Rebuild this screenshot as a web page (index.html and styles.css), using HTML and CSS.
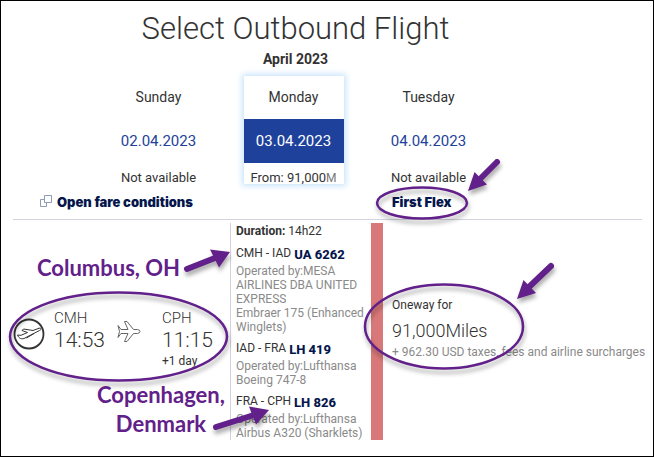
FILE: index.html
```html
<!DOCTYPE html>
<html lang="en">
<head>
<meta charset="utf-8">
<title>Select Outbound Flight</title>
<link rel="stylesheet" href="styles.css">
</head>
<body>
<main class="page">
  <header class="heading">
    <h1>Select Outbound Flight</h1>
    <h2>April 2023</h2>
    <div class="days">
      <section class="day">
        <h3>Sunday</h3>
        <a class="date" href="#">02.04.2023</a>
        <p>Not available</p>
      </section>
      <section class="day selected">
        <h3>Monday</h3>
        <a class="date" href="#">03.04.2023</a>
        <p>From: 91,000<span class="unit">M</span></p>
      </section>
      <section class="day">
        <h3>Tuesday</h3>
        <a class="date" href="#">04.04.2023</a>
        <p>Not available</p>
      </section>
    </div>
  </header>
  <div class="fares">
    <a class="conditions" href="#">
      <svg class="window-icon" viewBox="0 0 12 12" aria-hidden="true"><path d="M4.500 .5h7v7h-7zM4.500 4.500h-4v7h6v-4"/></svg>
      Open fare conditions
    </a>
    <a class="flex-fare" href="#">First Flex</a>
  </div>
  <div class="flight">
    <section class="times">
      <svg class="takeoff" viewBox="0 0 32 32" aria-hidden="true">
        <circle cx="16" cy="16" r="14.500" stroke-width="1.800"/>
        <path d="M4.500 17l3.500 .3 6.500-2.800-5.500-2 1.500-1.500 9.500 1.500 6-2.300c2.500-.6 2.800 1.300 .5 2.300L11 20.500c-2.500 .7-5 .2-6.500-3.500zM21 15.500L13.500 20"/>
      </svg>
      <div class="stop">
        <span class="airport">CMH</span>
        <time>14:53</time>
      </div>
      <svg class="plane" viewBox="0 0 24 22" aria-hidden="true"><path d="M1 5.500l3 4h7L7.500 1.500H10l6.500 8h4q2.500 .5 2.500 2t-2.500 2h-4l-6.500 8H7.500l3.500-8H4l-3 4 1.500-6z"/></svg>
      <div class="stop">
        <span class="airport">CPH</span>
        <time>11:15</time>
        <span class="offset">+1 day</span>
      </div>
    </section>
    <section class="segments">
      <p class="duration"><b>Duration:</b> 14h22</p>
      <article>
        <h4>CMH - IAD <a href="#">UA 6262</a></h4>
        <p>Operated by:MESA AIRLINES DBA UNITED EXPRESS<br>Embraer 175 (Enhanced Winglets)</p>
      </article>
      <article>
        <h4>IAD - FRA <a href="#">LH 419</a></h4>
        <p>Operated by:Lufthansa<br>Boeing 747-8</p>
      </article>
      <article>
        <h4>FRA - CPH <a href="#">LH 826</a></h4>
        <p>Operated by:Lufthansa<br>Airbus A320 (Sharklets)</p>
      </article>
    </section>
    <div class="bar"></div>
    <section class="price">
      <p class="caption">Oneway for</p>
      <p class="miles">91,000Miles</p>
      <p class="taxes">+ 962.30 USD taxes, fees and airline surcharges</p>
    </section>
  </div>
  <svg class="marks" width="654" height="457" viewBox="0 0 654 457" aria-hidden="true">
    <g class="rings">
      <ellipse cx="422" cy="203" rx="45" ry="15.500"/>
      <ellipse cx="118.500" cy="336.500" rx="108.500" ry="44"/>
      <ellipse cx="444" cy="326.500" rx="79" ry="42"/>
    </g>
    <g class="arrows">
      <path d="M497 162L479 180"/><path class="tip" d="M468 191l6.500-19 12.500 12.500z"/>
      <path d="M551 266L529 287"/><path class="tip" d="M517 299l6.500-19 12.500 13z"/>
      <path d="M187 269L215 258"/><path class="tip" d="M230 252l-20-2.500 9 18z"/>
      <path d="M216 427L254 415"/><path class="tip" d="M269 410l-20-3.500 7 18z"/>
    </g>
  </svg>
  <p class="note origin">Columbus, OH</p>
  <p class="note destination">Copenhagen,<br>Denmark</p>
</main>
</body>
</html>
```
FILE: styles.css
```css
* { box-sizing: border-box; }

body {
  margin: 0;
  background: #fff;
  color: #333;
  font: 12px/14px Roboto, "Liberation Sans", sans-serif;
}

h1, h2, h3, h4, p { margin: 0; font-weight: 400; }

a { color: #05164d; text-decoration: none; font-weight: 800; }

.page {
  position: relative;
  min-height: 100vh;
  padding: 8px 11px 16px 12px;
  border: 1px solid #000;
}

.heading { padding-right: 68px; text-align: center; }

h1 { font-size: 31px; line-height: 40px; font-weight: 300; padding-left: 4px; }
h2 { font-size: 14px; line-height: 20px; font-weight: 700; padding-left: 4px; }

.days {
  display: grid;
  grid-template-columns: repeat(3, 100px);
  column-gap: 35px;
  justify-content: center;
  padding-top: 7px;
}

.day h3 { font-size: 14px; line-height: 43px; }
.day p { font-size: 13px; line-height: 21px; padding-top: 4px; height: 21px; }
.date { display: block; font-size: 15px; line-height: 44px; font-weight: 400; color: #1e429b; }
.selected { box-shadow: 0 0 6px 2px #c8e4fa; }
.selected .date { background: #1e429b; color: #fff; }
.day .unit { color: #777; font-size: 12px; }

.fares, .flight {
  display: grid;
  grid-template-columns: 217px 141px 12px 1fr;
}

.fares { height: 36px; align-items: center; border-bottom: 1px solid #d3d3df; font: 13px/16px Inter, sans-serif; }
.conditions { display: flex; align-items: center; gap: 5px; padding-left: 27px; white-space: nowrap; }
.window-icon { width: 12px; height: 12px; margin-bottom: 2px; fill: none; stroke: #8d9bb8; }
.flex-fare { grid-column: 4; padding-left: 9px; }
.fares a { font-weight: 900; }

.flight { padding-top: 3px; }
.times { display: flex; align-items: flex-start; padding-top: 87px; }
.takeoff { width: 32px; height: 32px; margin-top: 8px; fill: none; stroke: #333; }
.stop { display: flex; flex-direction: column; margin-left: 9px; }
.airport { font-size: 15px; line-height: 16px; font-weight: 300; }
time { font-size: 21px; line-height: 28px; font-weight: 300; }
.offset { font-size: 12px; line-height: 14px; }
.plane { width: 24px; height: 22px; margin: 10px 12px 0; fill: none; stroke: #666; }

.segments { padding-left: 5px; border-left: 1px solid #d3d3df; }
.duration { font-size: 12px; line-height: 16px; }
article { padding-top: 3px; }
h4 { font-size: 12px; line-height: 22px; }
h4 a { vertical-align: -2px; font-size: 13px; line-height: 14px; }
article p { color: #8a8a8a; }
.bar { background: #d87878; }

.price { padding: 75px 0 0 9px; white-space: nowrap; }
.caption { font-size: 12px; }
.miles { font-size: 18px; line-height: 38px; font-weight: 300; }
.taxes { font-size: 12px; line-height: 14px; color: #8a8a8a; margin-top: -5px; }

.marks { position: absolute; left: -1px; top: -1px; pointer-events: none; filter: drop-shadow(1px 4px 2px #0005); }
.rings { fill: none; stroke: #62208a; stroke-width: 2.500; }
.arrows { fill: none; stroke: #62208a; stroke-width: 6; stroke-linecap: round; }
.tip { fill: #62208a; stroke: none; }

.note { position: absolute; color: #62208a; font: 700 22px/29px Lato, sans-serif; text-align: center; }
.origin { left: 36px; top: 252px; }
.destination { left: 96px; top: 379px; }
```
